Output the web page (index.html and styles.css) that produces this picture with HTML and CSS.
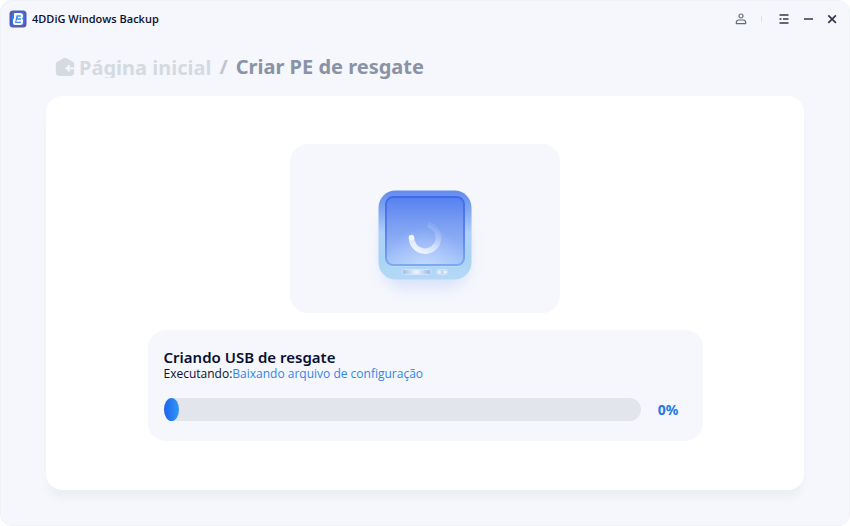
FILE: index.html
```html
<!DOCTYPE html>
<html lang="pt-BR">
<head>
<meta charset="utf-8">
<meta name="viewport" content="width=device-width, initial-scale=1">
<title>4DDiG Windows Backup</title>
<link rel="stylesheet" href="styles.css">
</head>
<body>
<div class="window">
  <header class="titlebar">
    <svg class="logo" viewBox="0 0 18 18" aria-hidden="true">
      <defs>
        <linearGradient id="logo-bg" x1="0" y1="0" x2="1" y2="1"><stop offset="0" stop-color="#6058a8"/><stop offset=".5" stop-color="#4a5fc4"/><stop offset="1" stop-color="#6e4a98"/></linearGradient>
      </defs>
      <rect x="0.5" y="0.5" width="17" height="17" rx="3.500" fill="url(#logo-bg)"/>
      <rect x="3" y="2.500" width="12.500" height="13" rx="3" fill="#2d7df4"/>
      <path d="M6 3h5.500a2.500 2.500 0 0 1 2.500 2.500v1.300a2 2 0 0 1-1 1.700a2 2 0 0 1 1 1.800v1.700a3 3 0 0 1-3 3H6a2 2 0 0 1-2-2v-3l1-2V4a1 1 0 0 1 1-1z" fill="#fff"/>
      <path d="M7.500 5.200h4.200v1.500H8.800v1.500H12v1.500H8l-.7 2H12v1.300H6z" fill="#4389f0"/>
    </svg>
    <h1 class="app-name">4DDiG Windows Backup</h1>
    <div class="controls">
      <button class="control" type="button" aria-label="Conta">
        <svg viewBox="0 0 14 14" fill="none" stroke="#666b7b" stroke-width="1.200"><circle cx="7" cy="4" r="2"/><path d="M2.300 11.600v-1A2.700 2.700 0 0 1 5 8h4a2.700 2.700 0 0 1 2.700 2.600v1z" stroke-linejoin="round"/></svg>
      </button>
      <span class="divider"></span>
      <button class="control" type="button" aria-label="Menu">
        <svg viewBox="0 0 14 14" fill="none" stroke="#33384e" stroke-width="1.400"><path d="M2.500 3h9M2.500 11h9M2.500 7h2M6 7h5.500"/></svg>
      </button>
      <button class="control" type="button" aria-label="Minimizar">
        <svg viewBox="0 0 14 14" fill="none" stroke="#33384e" stroke-width="1.500"><path d="M3 7h9"/></svg>
      </button>
      <button class="control" type="button" aria-label="Fechar">
        <svg viewBox="0 0 14 14" fill="none" stroke="#33384e" stroke-width="1.700"><path d="M3.300 3.300l7.600 7.600M10.900 3.300l-7.600 7.600"/></svg>
      </button>
    </div>
  </header>

  <nav class="breadcrumb" aria-label="Navegação">
    <a class="home" href="#">
      <svg class="home-icon" viewBox="0 0 20 20" aria-hidden="true"><path d="M8.300 1.300a3 3 0 0 1 3.400 0l6 3.500a3 3 0 0 1 1.500 2.600v7.600a4 4 0 0 1-4 4H4.800a4 4 0 0 1-4-4V7.400a3 3 0 0 1 1.500-2.600z" fill="#d5dae1"/><path d="M20 11.300h-8M14.800 8.300l-3.400 3 3.400 3" fill="none" stroke="#f5f7fc" stroke-width="1.700"/></svg>
      <span class="home-label">Página inicial</span>
    </a>
    <span class="slash">/</span>
    <span class="current" aria-current="page">Criar PE de resgate</span>
  </nav>

  <main class="card">
    <div class="illustration">
      <svg class="device" viewBox="0 0 130 130" role="img" aria-label="Criando">
        <defs>
          <linearGradient id="shell" x1="0" y1="0" x2="0" y2="1"><stop offset="0" stop-color="#648bee"/><stop offset=".2" stop-color="#7ea4f2"/><stop offset=".48" stop-color="#b0d0fa"/><stop offset=".75" stop-color="#a9d4f4"/><stop offset="1" stop-color="#b4d9f7"/></linearGradient>
          <linearGradient id="screen" x1="0" y1="0" x2="0" y2="1"><stop offset="0" stop-color="#5680f2"/><stop offset=".4" stop-color="#7b9ff1"/><stop offset=".75" stop-color="#94b4f7"/><stop offset="1" stop-color="#a6c8fb"/></linearGradient>
          <linearGradient id="edge" x1="0" y1="0" x2="0" y2="1"><stop offset="0" stop-color="#416ae6"/><stop offset=".6" stop-color="#5f87ec"/><stop offset="1" stop-color="#7da8f2"/></linearGradient>
          <radialGradient id="glow" gradientUnits="userSpaceOnUse" cx="65" cy="92" r="40"><stop offset="0" stop-color="#cfe2fe" stop-opacity=".65"/><stop offset="1" stop-color="#cfe2fe" stop-opacity="0"/></radialGradient>
          <linearGradient id="slot"><stop offset="0" stop-color="#9cbbe9"/><stop offset=".5" stop-color="#edf4ff"/><stop offset="1" stop-color="#96b2e6"/></linearGradient>
          <linearGradient id="spin" gradientUnits="userSpaceOnUse" x1="55" y1="76" x2="72" y2="48"><stop offset="0" stop-color="#f2f6ff"/><stop offset=".45" stop-color="#cfdefb"/><stop offset="1" stop-color="#a3bdf4" stop-opacity=".2"/></linearGradient>
          <filter id="shadow" x="-30%" y="-30%" width="160%" height="160%"><feGaussianBlur stdDeviation="7"/></filter>
        </defs>
        <rect x="21" y="38" width="88" height="75" rx="22" fill="#c6d4fd" opacity=".6" filter="url(#shadow)"/>
        <rect x="18.500" y="15.500" width="93" height="89" rx="17" fill="url(#shell)"/>
        <rect x="25" y="21" width="80" height="71" rx="8" fill="#c6ddff" opacity=".5"/>
        <rect x="26" y="22" width="78" height="68" rx="7" fill="url(#screen)" stroke="url(#edge)" stroke-width="2"/>
        <rect x="27" y="23" width="76" height="66" rx="6" fill="url(#glow)"/>
        <path d="M51.500 62.500A13.500 13.500 0 1 0 68 49.500" fill="none" stroke="url(#spin)" stroke-width="5.500"/>
        <circle cx="51.500" cy="62.500" r="2.700" fill="#f2f6ff"/>
        <rect x="42" y="94.500" width="29" height="5" rx="2.500" fill="url(#slot)" stroke="#d3e4fd"/>
        <rect x="76.500" y="94.500" width="11" height="5" rx="2.500" fill="#c1d6f6" stroke="#d3e4fd"/>
        <circle cx="79.500" cy="97" r="1.500" fill="#edf4ff"/><circle cx="85" cy="97" r="1.500" fill="#edf4ff"/>
      </svg>
    </div>
    <section class="progress-panel">
      <h2 class="panel-title">Criando USB de resgate</h2>
      <p class="status">Executando:<span class="step">Baixando arquivo de configuração</span></p>
      <div class="progress-row">
        <div class="track" role="progressbar" aria-label="Criando USB de resgate" aria-valuemin="0" aria-valuemax="100" aria-valuenow="0"><div class="fill"></div></div>
        <span class="percent">0%</span>
      </div>
    </section>
  </main>
</div>
</body>
</html>
```
FILE: styles.css
```css
* {
  box-sizing: border-box;
}

body {
  margin: 0;
  background: #fff;
  color: #0a1030;
  font-family: "Noto Sans", "Open Sans", sans-serif;
}

h1, h2, p {
  margin: 0;
}

.window {
  display: flex;
  flex-direction: column;
  min-height: 100vh;
  padding-bottom: 35px;
  border: 1px solid #f0f2f7;
  border-radius: 12px;
  background: #f5f7fc;
}

.titlebar {
  display: flex;
  align-items: center;
  gap: 5px;
  height: 36px;
  padding: 0 10px 0 8px;
}

.logo {
  width: 18px;
  height: 18px;
}

.app-name {
  font-family: "Open Sans", sans-serif;
  font-size: 11px;
  font-weight: 600;
  line-height: 16px;
}

.controls {
  display: flex;
  align-items: center;
  gap: 10px;
  margin-left: auto;
}

.control {
  display: flex;
  width: 14px;
  height: 14px;
  padding: 0;
  border: 0;
  background: none;
}

.control svg {
  width: 100%;
  height: 100%;
}

.divider {
  width: 1px;
  height: 6px;
  margin: 0 5px 0 3px;
  background: #dde0e8;
}

.breadcrumb {
  display: flex;
  align-items: center;
  gap: 8px;
  height: 59px;
  padding: 0 54px;
  font-size: 20px;
  font-weight: 700;
  line-height: 24px;
}

.home {
  display: flex;
  align-items: center;
  gap: 4px;
  color: #d5dae1;
  text-decoration: none;
}

.home-icon {
  width: 20px;
  height: 20px;
}

.home-label {
  height: 22px;
  overflow: hidden;
}

.slash {
  color: #bfc4d0;
}

.current {
  color: #8a92a6;
}

.card {
  display: flex;
  flex: 1;
  flex-direction: column;
  align-items: center;
  gap: 17px;
  margin: 0 45px;
  padding: 48px 24px;
  border-radius: 16px;
  background: #fff;
  box-shadow: 0 10px 8px -2px #eceef3;
}

.illustration {
  display: flex;
  justify-content: center;
  width: 100%;
  max-width: 270px;
  padding: 31px 0 8px;
  border-radius: 18px;
  background: #f5f7fc;
}

.device {
  width: 130px;
  height: 130px;
}

.progress-panel {
  width: 100%;
  max-width: 555px;
  padding: 17px 24px 20px 16px;
  border-radius: 18px;
  background: #f5f7fc;
}

.panel-title {
  font-size: 15px;
  font-weight: 600;
  line-height: 20px;
}

.status {
  font-family: "Open Sans", sans-serif;
  font-size: 12px;
  line-height: 14px;
}

.step {
  color: #2f86ea;
}

.progress-row {
  display: flex;
  align-items: center;
  gap: 17px;
  margin-top: 17px;
}

.track {
  flex: 1;
  height: 23px;
  border-radius: 12px;
  background: #e2e5ec;
}

.fill {
  width: 15px;
  height: 100%;
  border-radius: 50%;
  background: linear-gradient(90deg, #1f62ed, #2f97f8);
}

.percent {
  color: #2478e5;
  font-size: 14px;
  font-weight: 700;
  line-height: 20px;
}
```
